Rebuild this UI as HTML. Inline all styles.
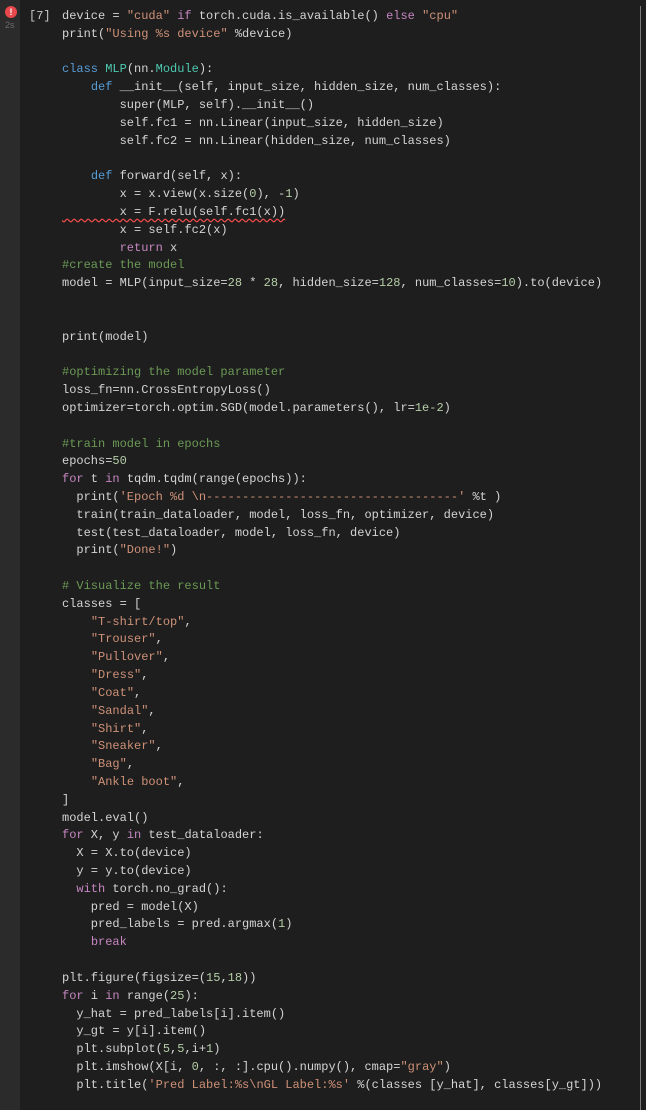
<!DOCTYPE html>
<html><head><meta charset="utf-8"><style>
html,body{margin:0;padding:0;background:#1e1e1e;width:646px;height:1110px;overflow:hidden}
.g{position:absolute;left:0;top:0;width:20px;height:1110px;background:#2b2b2b}
.err{position:absolute;left:5px;top:6px;width:12px;height:12px;border-radius:50%;background:#e8474b;color:#fff;font:bold 9px "Liberation Sans",sans-serif;text-align:center;line-height:12px}
.t{position:absolute;left:5px;top:20px;font:9px "Liberation Sans",sans-serif;color:#6a6a6a}
.n{position:absolute;left:29px;top:8px;font:12px/17.82px "Liberation Mono",monospace;color:#c8c8c8}
.sb{position:absolute;left:640px;top:6px;width:1px;height:1104px;background:#7a7a7a}
pre{position:absolute;left:62px;top:8px;margin:0;font:12px/17.82px "Liberation Mono",monospace;color:#d4d4d4;white-space:pre}
.k{color:#c586c0}.d{color:#569cd6}.s{color:#ce9178}.c{color:#6a9955}.m{color:#b5cea8}.f{color:#d4d4d4}.cl{color:#4ec9b0}
.w{text-decoration:underline wavy #f14c4c;text-underline-offset:3px}
</style></head><body>
<div class="g"></div>
<div class="err">!</div>
<div class="t">2s</div>
<div class="n">[7]</div>
<div class="sb"></div>
<pre>device = <span class="s">"cuda"</span> <span class="k">if</span> torch.cuda.is_available() <span class="k">else</span> <span class="s">"cpu"</span>
print(<span class="s">"Using %s device"</span> %device)

<span class="d">class</span> <span class="cl">MLP</span>(nn.<span class="cl">Module</span>):
    <span class="d">def</span> __init__(self, input_size, hidden_size, num_classes):
        super(MLP, self).__init__()
        self.fc1 = nn.Linear(input_size, hidden_size)
        self.fc2 = nn.Linear(hidden_size, num_classes)

    <span class="d">def</span> forward(self, x):
        x = x.view(x.size(<span class="m">0</span>), -<span class="m">1</span>)
<span class="w">        x = F.relu(self.fc1(x))</span>
        x = self.fc2(x)
        <span class="k">return</span> x
<span class="c">#create the model</span>
model = MLP(input_size=<span class="m">28</span> * <span class="m">28</span>, hidden_size=<span class="m">128</span>, num_classes=<span class="m">10</span>).to(device)


print(model)

<span class="c">#optimizing the model parameter</span>
loss_fn=nn.CrossEntropyLoss()
optimizer=torch.optim.SGD(model.parameters(), lr=<span class="m">1e-2</span>)

<span class="c">#train model in epochs</span>
epochs=<span class="m">50</span>
<span class="k">for</span> t <span class="k">in</span> tqdm.tqdm(range(epochs)):
  print(<span class="s">'Epoch %d \n-----------------------------------'</span> %t )
  train(train_dataloader, model, loss_fn, optimizer, device)
  test(test_dataloader, model, loss_fn, device)
  print(<span class="s">"Done!"</span>)

<span class="c"># Visualize the result</span>
classes = [
    <span class="s">"T-shirt/top"</span>,
    <span class="s">"Trouser"</span>,
    <span class="s">"Pullover"</span>,
    <span class="s">"Dress"</span>,
    <span class="s">"Coat"</span>,
    <span class="s">"Sandal"</span>,
    <span class="s">"Shirt"</span>,
    <span class="s">"Sneaker"</span>,
    <span class="s">"Bag"</span>,
    <span class="s">"Ankle boot"</span>,
]
model.eval()
<span class="k">for</span> X, y <span class="k">in</span> test_dataloader:
  X = X.to(device)
  y = y.to(device)
  <span class="k">with</span> torch.no_grad():
    pred = model(X)
    pred_labels = pred.argmax(<span class="m">1</span>)
    <span class="k">break</span>

plt.figure(figsize=(<span class="m">15</span>,<span class="m">18</span>))
<span class="k">for</span> i <span class="k">in</span> range(<span class="m">25</span>):
  y_hat = pred_labels[i].item()
  y_gt = y[i].item()
  plt.subplot(<span class="m">5</span>,<span class="m">5</span>,i+<span class="m">1</span>)
  plt.imshow(X[i, <span class="m">0</span>, :, :].cpu().numpy(), cmap=<span class="s">"gray"</span>)
  plt.title(<span class="s">'Pred Label:%s\nGL Label:%s'</span> %(classes [y_hat], classes[y_gt]))</pre>
</body></html>
